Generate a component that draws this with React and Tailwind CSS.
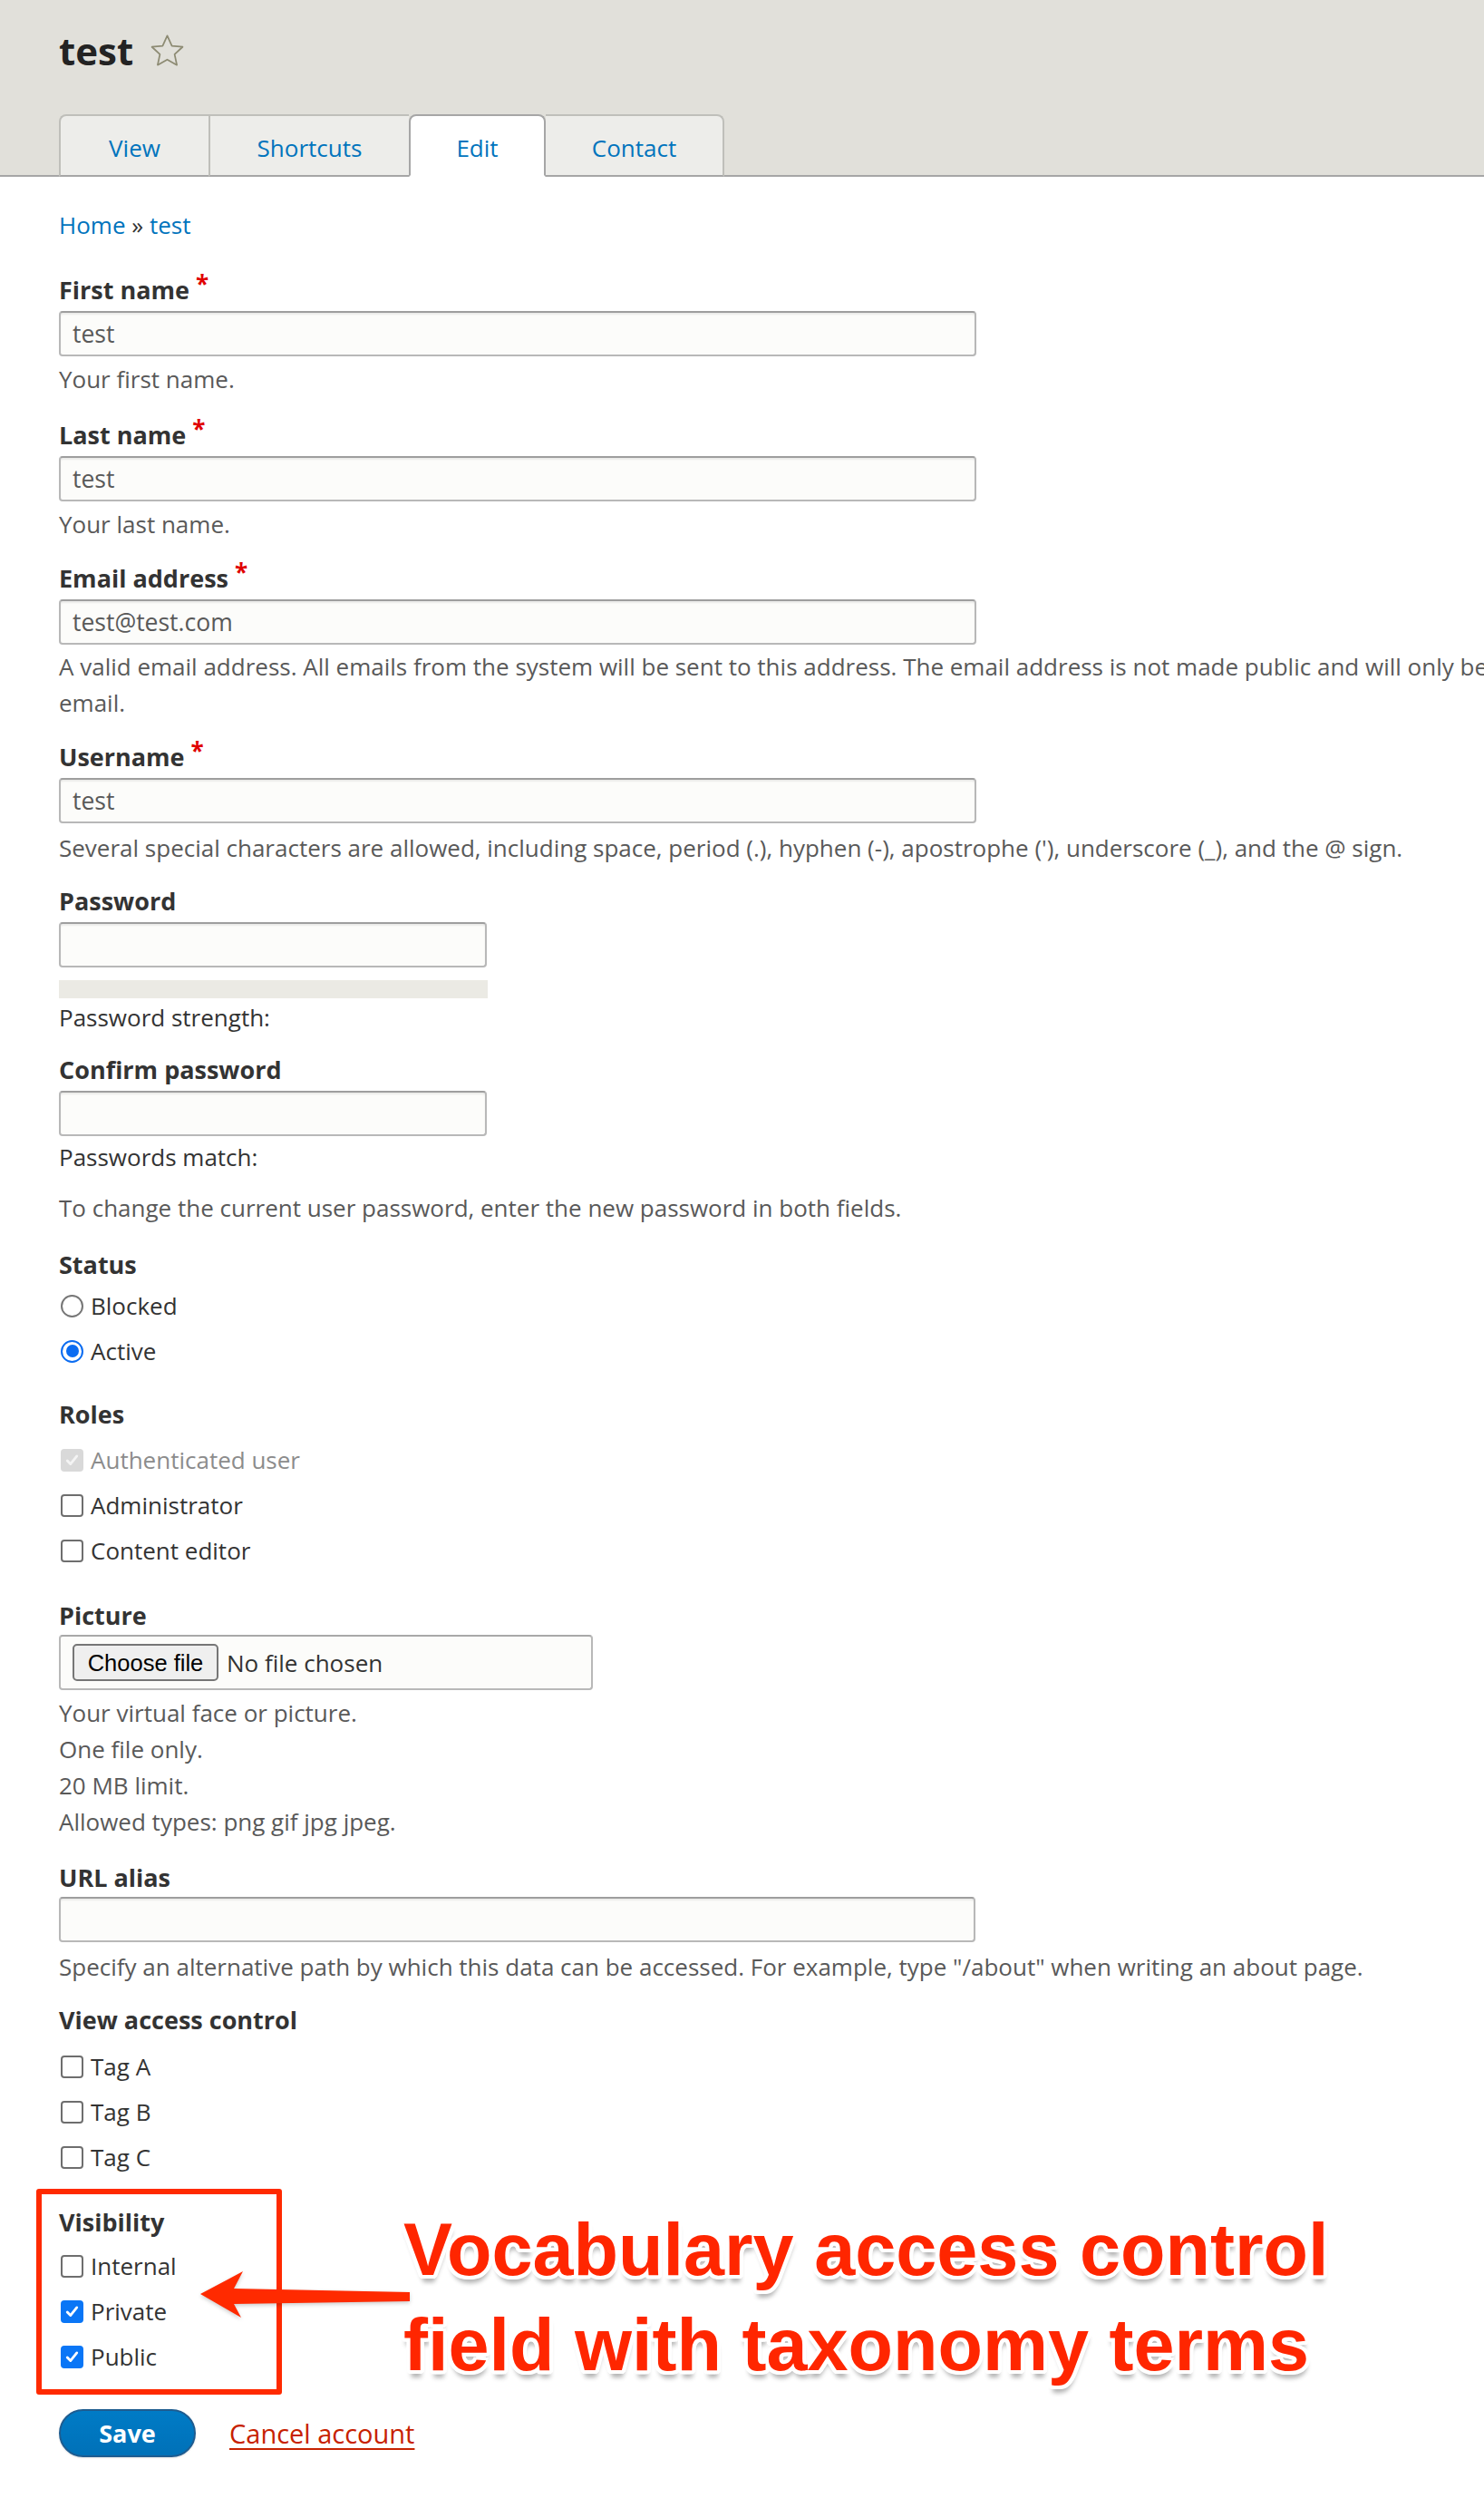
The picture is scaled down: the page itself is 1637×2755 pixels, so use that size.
import React from 'react';

const Label = ({ children, required }) => (
  <div className="text-[27px] font-bold leading-[40px] text-[#333]">
    {children}
    {required && <span className="relative top-[-7px] ml-[7px] text-[26px] text-[#e00000]">*</span>}
  </div>
);

const TextInput = ({ value, width, mt = 'mt-[3px]' }) => (
  <input
    readOnly
    defaultValue={value}
    className={`${width} ${mt} block h-[50px] rounded-[4px] border-2 border-[#b8b8b8] border-t-[#9e9e9e] bg-[#fcfcfa] px-[13px] text-[26.5px] text-[#595959] shadow-[inset_0_2px_2px_rgba(0,0,0,0.07)] outline-none`}
  />
);

const Desc = ({ children, mt = 'mt-[5px]' }) => <div className={`${mt} text-[#595959]`}>{children}</div>;

const CheckMark = ({ color }) => (
  <svg viewBox="0 0 24 24" className="h-[21px] w-[21px]" fill="none" stroke={color} strokeWidth="3.2" strokeLinecap="round" strokeLinejoin="round">
    <path d="M6 12.5l4 4.2 8-10" />
  </svg>
);

const Check = ({ checked, disabled, children }) => (
  <div className="flex h-[50px] items-center">
    {disabled ? (
      <span className="ml-[2px] flex h-[25px] w-[25px] items-center justify-center rounded-[4px] bg-[#d9d9d9]">
        <CheckMark color="#f4f4f4" />
      </span>
    ) : checked ? (
      <span className="ml-[2px] flex h-[25px] w-[25px] items-center justify-center rounded-[4px] bg-[#0a76f6]">
        <CheckMark color="#ffffff" />
      </span>
    ) : (
      <span className="ml-[2px] h-[25px] w-[25px] rounded-[4px] border-2 border-[#6e6e6e] bg-white" />
    )}
    <span className={`ml-[8px] ${disabled ? 'text-[#8c8c8c]' : 'text-[#333]'}`}>{children}</span>
  </div>
);

const Radio = ({ checked, children }) => (
  <div className="flex h-[50px] items-center">
    {checked ? (
      <span className="ml-[2px] flex h-[25px] w-[25px] items-center justify-center rounded-full border-2 border-[#0b6cf1] bg-white">
        <span className="h-[14px] w-[14px] rounded-full bg-[#0b6cf1]" />
      </span>
    ) : (
      <span className="ml-[2px] h-[25px] w-[25px] rounded-full border-2 border-[#767676] bg-white" />
    )}
    <span className="ml-[8px] text-[#333]">{children}</span>
  </div>
);

const Star = () => (
  <svg viewBox="1.5 1.5 21 21" className="ml-[19px] h-[37px] w-[37px]" fill="none" stroke="#8d8b73" strokeWidth="1" strokeLinejoin="round">
    <path d="M12 2.3l2.9 6.3 6.7.7-5 4.6 1.4 6.7L12 17.2l-6 3.4 1.4-6.7-5-4.6 6.7-.7z" />
  </svg>
);

const tabBase = 'flex h-[69px] items-center justify-center pt-[4px] text-[26px] text-[#0074bd] border-t-2 border-b-2';

export default function App() {
  return (
    <div className="relative min-h-[2755px] w-[1637px] overflow-hidden bg-white font-['Open_Sans',sans-serif] text-[26px] leading-[40px] text-[#333]">
      {/* Header */}
      <div className="border-b-2 border-[#a6a6a6] bg-[#e1e0da] px-[65px] pt-[31px]">
        <div className="flex h-[50px] items-center">
          <h1 className="text-[42px] font-bold leading-[50px] text-[#232323]">test</h1>
          <Star />
        </div>
        <ul className="mb-[-2px] mt-[45px] flex">
          <li className={`${tabBase} w-[165px] rounded-tl-[8px] border-l-2 border-[#bfbfba] border-b-[#a6a6a6] bg-[#ededea]`}>View</li>
          <li className={`${tabBase} w-[221px] border-l-2 border-[#bfbfba] border-b-[#a6a6a6] bg-[#ededea]`}>Shortcuts</li>
          <li className={`${tabBase} w-[151px] rounded-t-[8px] border-x-2 border-[#a6a6a6] border-b-white bg-white`}>Edit</li>
          <li className={`${tabBase} w-[197px] rounded-tr-[8px] border-r-2 border-[#bfbfba] border-b-[#a6a6a6] bg-[#ededea]`}>Contact</li>
        </ul>
      </div>

      {/* Form */}
      <div className="px-[65px]">
        <div className="mt-[33px]">
          <a href="#" className="text-[#0074bd]">Home</a>
          <span className="text-[#333]"> » </span>
          <a href="#" className="text-[#0074bd]">test</a>
        </div>

        <div className="mt-[32px]">
          <Label required>First name</Label>
          <TextInput value="test" width="w-[1012px]" />
          <Desc>Your first name.</Desc>
        </div>

        <div className="mt-[22px]">
          <Label required>Last name</Label>
          <TextInput value="test" width="w-[1012px]" />
          <Desc>Your last name.</Desc>
        </div>

        <div className="mt-[20px]">
          <Label required>Email address</Label>
          <TextInput value="test@test.com" width="w-[1012px]" />
          <Desc mt="mt-[4px]">
            <div className="whitespace-nowrap">
              A valid email address. All emails from the system will be sent to this address. The email address is not made public and will only be used if you wish to receive a new password or wish to receive certain news or notifications by
            </div>
            <div>email.</div>
          </Desc>
        </div>

        <div className="mt-[20px]">
          <Label required>Username</Label>
          <TextInput value="test" width="w-[1012px]" />
          <Desc mt="mt-[7px]">Several special characters are allowed, including space, period (.), hyphen (-), apostrophe ('), underscore (_), and the @ sign.</Desc>
        </div>

        <div className="mt-[19px]">
          <Label>Password</Label>
          <TextInput value="" width="w-[472px]" />
          <div className="mt-[14px] h-[20px] w-[473px] bg-[#ebeae4]" />
          <div className="mt-[1px]">Password strength:</div>
        </div>

        <div className="mt-[18px]">
          <Label>Confirm password</Label>
          <TextInput value="" width="w-[472px]" />
          <div className="mt-[3px]">Passwords match:</div>
        </div>

        <Desc mt="mt-[16px]">To change the current user password, enter the new password in both fields.</Desc>

        <div className="mt-[23px]">
          <Label>Status</Label>
          <Radio>Blocked</Radio>
          <Radio checked>Active</Radio>
        </div>

        <div className="mt-[25px]">
          <Label>Roles</Label>
          <div className="mt-[5px]">
            <Check disabled>Authenticated user</Check>
            <Check>Administrator</Check>
            <Check>Content editor</Check>
          </div>
        </div>

        <div className="mt-[27px]">
          <Label>Picture</Label>
          <div className="mt-[1px] flex h-[61px] w-[589px] items-center rounded-[4px] border-2 border-[#b8b8b8] border-t-[#a8a8a8] bg-[#fcfcfa] pl-[13px]">
            <span className="flex h-[41px] w-[161px] items-center justify-center rounded-[5px] border-2 border-[#767676] bg-[#efefef] font-['Liberation_Sans',sans-serif] text-[25.5px] text-black">
              Choose file
            </span>
            <span className="ml-[9px] text-[#333]">No file chosen</span>
          </div>
          <Desc>
            <div>Your virtual face or picture.</div>
            <div>One file only.</div>
            <div>20 MB limit.</div>
            <div>Allowed types: png gif jpg jpeg.</div>
          </Desc>
        </div>

        <div className="mt-[22px]">
          <Label>URL alias</Label>
          <TextInput value="" width="w-[1011px]" mt="mt-[1px]" />
          <Desc mt="mt-[7px]">Specify an alternative path by which this data can be accessed. For example, type "/about" when writing an about page.</Desc>
        </div>

        <div className="mt-[19px]">
          <Label>View access control</Label>
          <div className="mt-[6px]">
            <Check>Tag A</Check>
            <Check>Tag B</Check>
            <Check>Tag C</Check>
          </div>
        </div>

        <div className="ml-[-25px] mt-[10px] w-[271px] rounded-[3px] border-[6px] border-[#ff2a00] pb-[11px] pl-[19px] pt-[11px]">
          <Label>Visibility</Label>
          <div className="mt-[3px]">
            <Check>Internal</Check>
            <Check checked>Private</Check>
            <Check checked>Public</Check>
          </div>
        </div>

        <div className="mt-[16px] flex items-center">
          <button className="h-[53px] w-[151px] rounded-full border-2 border-[#1e5c90] bg-gradient-to-b from-[#007bc6] to-[#0071b8] text-[27px] font-bold text-white shadow-[0_1px_2px_rgba(0,0,0,0.12)]">
            Save
          </button>
          <a href="#" className="ml-[37px] text-[29px] text-[#c72100] underline decoration-[2px] underline-offset-[5px]">
            Cancel account
          </a>
        </div>
      </div>

      {/* Annotation */}
      <svg className="absolute left-[210px] top-[2495px] h-[70px] w-[250px] drop-shadow-[0_2px_2px_rgba(0,0,0,0.2)]" viewBox="0 0 250 70">
        <polygon points="11,35 58,10 48,29 242,33 242,43 48,46 56,61" fill="#ff2a00" />
      </svg>
      <div className="absolute left-[445px] top-[2429px] whitespace-nowrap font-['Liberation_Sans',sans-serif] text-[81px] font-bold leading-[105px] text-[#ff2600] [text-shadow:4px_0_#fff,-4px_0_#fff,0_4px_#fff,0_-4px_#fff,3px_3px_#fff,-3px_3px_#fff,3px_-3px_#fff,-3px_-3px_#fff,2px_4px_#fff,-2px_4px_#fff,4px_2px_#fff,-4px_2px_#fff,1px_8px_5px_rgba(0,0,0,0.3)]">
        <div>Vocabulary access control</div>
        <div>field with taxonomy terms</div>
      </div>
    </div>
  );
}
